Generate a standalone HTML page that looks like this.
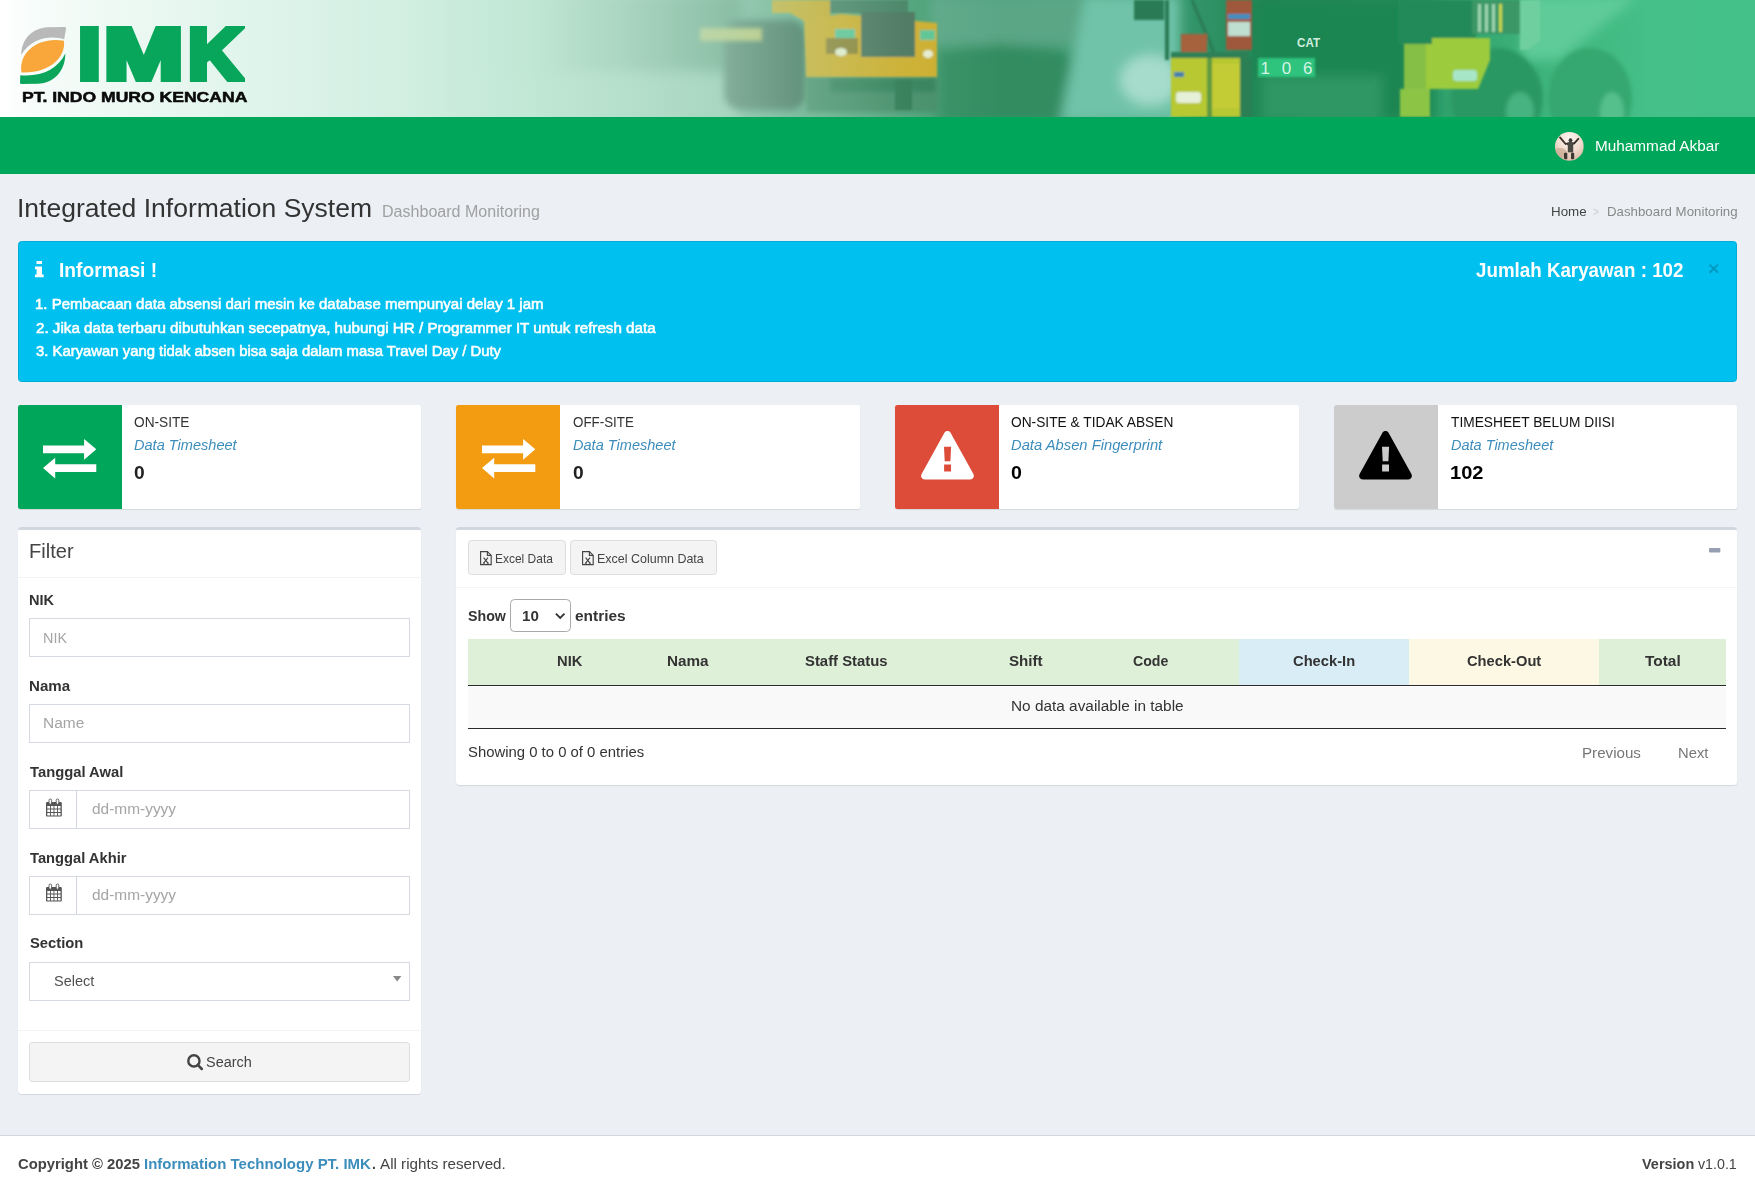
<!DOCTYPE html>
<html lang="en">
<head>
<meta charset="utf-8">
<title>Dashboard Monitoring</title>
<style>
*{box-sizing:border-box;}
html,body{margin:0;padding:0;}
body{width:1755px;height:1192px;overflow:hidden;background:#ecf0f5;font-family:"Liberation Sans",sans-serif;font-size:15px;color:#333;position:relative;}
.abs{position:absolute;}
.t{position:absolute;white-space:nowrap;line-height:1;transform-origin:0 0;display:block;}
svg{position:absolute;overflow:visible;}
#banner{left:0;top:0;width:1755px;height:117px;background:#fff;overflow:hidden;}
#navbar{left:0;top:117px;width:1755px;height:57.4px;background:#00a65a;}
#alert{left:17.8px;top:240.7px;width:1719.3px;height:141px;background:#00c0ef;border:1px solid #00acd6;border-radius:3.5px;}
.ib{position:absolute;top:404.6px;height:104px;width:403.5px;background:#fff;border-radius:2.3px;box-shadow:0 1px 1px rgba(0,0,0,.1);}
.ib .ic{position:absolute;left:0;top:0;width:104px;height:104px;border-radius:2.3px 0 0 2.3px;}
.box{position:absolute;background:#fff;border-top:3.4px solid #d2d6de;border-radius:3.5px;box-shadow:0 1px 1px rgba(0,0,0,.1);}
.hr{position:absolute;height:1.2px;background:#f4f4f4;}
.inp{position:absolute;left:28.8px;width:381.2px;height:39.2px;border:1px solid #d5d9e0;background:#fff;}
.btn{position:absolute;background:#f4f4f4;border:1.15px solid #ddd;border-radius:3.5px;}
#footer{left:0;top:1134.8px;width:1755px;height:58px;background:#fff;border-top:1.15px solid #d2d6de;}
</style>
</head>
<body>

<div id="banner" class="abs">
<svg style="left:0;top:0;" width="1755" height="117" viewBox="0 0 1755 117">
<defs>
<linearGradient id="bg1" x1="0" x2="1" y1="0" y2="0">
<stop offset="0" stop-color="#6fae90"/><stop offset="0.40" stop-color="#6fae90"/><stop offset="0.47" stop-color="#5aa884"/><stop offset="0.55" stop-color="#3f9a6d"/><stop offset="0.62" stop-color="#4aa57e"/><stop offset="0.72" stop-color="#22895a"/><stop offset="0.80" stop-color="#2c9a66"/><stop offset="0.88" stop-color="#3eb47c"/><stop offset="0.94" stop-color="#45c088"/><stop offset="1" stop-color="#43c189"/>
</linearGradient>
<linearGradient id="haze" gradientUnits="userSpaceOnUse" x1="0" x2="1000" y1="0" y2="0">
<stop offset="0" stop-color="#ffffff"/><stop offset="0.04" stop-color="#f6fcf9"/><stop offset="0.24" stop-color="#e1f5ec"/><stop offset="0.40" stop-color="#d2efe2"/><stop offset="0.52" stop-color="#c4e9d8" stop-opacity="0.97"/><stop offset="0.62" stop-color="#c0e6d4" stop-opacity="0.82"/><stop offset="0.72" stop-color="#bde4d1" stop-opacity="0.58"/><stop offset="0.80" stop-color="#bbe3cf" stop-opacity="0.34"/><stop offset="0.90" stop-color="#bbe3cf" stop-opacity="0.12"/><stop offset="1" stop-color="#bbe3cf" stop-opacity="0"/>
</linearGradient>
<filter id="b6" x="-20%" y="-50%" width="140%" height="200%"><feGaussianBlur stdDeviation="6"/></filter>
<filter id="b3" x="-20%" y="-50%" width="140%" height="200%"><feGaussianBlur stdDeviation="3.5"/></filter>
<filter id="b2" x="-20%" y="-50%" width="140%" height="200%"><feGaussianBlur stdDeviation="2"/></filter>
<filter id="b1" x="-20%" y="-50%" width="140%" height="200%"><feGaussianBlur stdDeviation="0.8"/></filter>
</defs>
<rect width="1755" height="117" fill="url(#bg1)"/>
<g filter="url(#b6)">
<!-- hazy left -->
<rect x="480" y="75" width="260" height="50" fill="#8cc4a8"/>
<rect x="560" y="-5" width="180" height="75" fill="#4f9070"/>
<!-- behind truck1 -->
<rect x="930" y="-5" width="170" height="50" fill="#5aa685"/>
<path d="M938 52 1000 44 1060 50 1100 70 1105 123H938Z" fill="#308c60"/>
<!-- teal rock -->
<path d="M1085 -5H1180V122H1060Z" fill="#6fc3a8"/>
<ellipse cx="1150" cy="80" rx="30" ry="25" fill="#a5dccb"/>
<!-- cat truck dark -->
<rect x="1250" y="-5" width="185" height="127" fill="#1d8653"/>
<rect x="1262" y="76" width="120" height="46" fill="#2f9764"/>
<!-- right light body -->
<path d="M1530 -5H1640L1560 60H1520Z" fill="#5fcb99"/>
</g>
<g filter="url(#b3)">
<rect x="724" y="20" width="82" height="90" rx="16" fill="#386b52"/>
</g>
<g filter="url(#b2)">
<!-- truck 1 wheels & shadows -->
<rect x="806" y="76" width="132" height="36" fill="#3f8a65"/>
<rect x="830" y="78" width="105" height="14" fill="#2f7d57"/>
<rect x="700" y="28" width="62" height="13" fill="#b9bf62"/>
<!-- tires right -->
<ellipse cx="1497" cy="98" rx="46" ry="50" fill="#2c9864"/>
<ellipse cx="1590" cy="98" rx="42" ry="50" fill="#34a770"/>
<ellipse cx="1520" cy="112" rx="14" ry="20" fill="#46b380"/>
<ellipse cx="1612" cy="112" rx="12" ry="20" fill="#55c08c"/>
</g>
<g filter="url(#b1)">
<!-- truck 1 yellow -->
<path d="M772 0H830V16L806 22 790 13H772Z" fill="#cbaa27"/>
<rect x="830" y="0" width="78" height="13" fill="#3f7d5f"/>
<path d="M804 19 842 14 937 23V77H806Z" fill="#cfac26"/>
<path d="M861 12H915V57H861Z" fill="#456f59"/>
<rect x="835" y="29" width="20" height="10" fill="#58c493"/>
<rect x="920" y="30" width="15" height="10" fill="#58c493"/>
<rect x="826" y="38" width="32" height="16" fill="#8a7f2e"/>
<ellipse cx="841" cy="52" rx="6" ry="4" fill="#e9efcf"/>
<ellipse cx="928" cy="54" rx="5" ry="4" fill="#e9efcf"/>
<rect x="895" y="80" width="17" height="30" fill="#2a7550"/>
<!-- mirror -->
<rect x="1134" y="0" width="30" height="20" fill="#2b7a55"/>
<rect x="1165" y="0" width="4" height="60" fill="#2b7a55"/>
<path d="M1192 0 1215 55" stroke="#2b7a55" stroke-width="3"/>
<!-- red items -->
<rect x="1181" y="34" width="26" height="20" fill="#a5623d"/>
<rect x="1226" y="0" width="26" height="50" fill="#9f583b"/>
<rect x="1228" y="22" width="22" height="14" fill="#bfe0d0"/>
<rect x="1228" y="14" width="22" height="5" fill="#3f8fc0"/>
<!-- cab yellow-green -->
<rect x="1171" y="55" width="78" height="62" fill="#b7c833"/>
<rect x="1171" y="52" width="78" height="6" fill="#2f8057"/>
<rect x="1207" y="58" width="5" height="59" fill="#5f9a3f"/>
<rect x="1212" y="64" width="27" height="44" fill="#c4cc34"/>
<rect x="1176" y="92" width="25" height="11" rx="3" fill="#e6f0d8"/>
<rect x="1174" y="72" width="10" height="5" fill="#3f7fb0"/>
<rect x="1240" y="58" width="12" height="59" fill="#2a7f55"/>
<!-- 106 label -->
<rect x="1258" y="58" width="57" height="19" fill="#2ec47e"/>
<!-- yellow-green block right -->
<rect x="1398" y="0" width="78" height="44" fill="#218a58"/>
<path d="M1404 44H1432V38H1490V60L1478 89H1404Z" fill="#9ccb3d"/>
<rect x="1404" y="44" width="22" height="45" fill="#86bf45"/>
<rect x="1400" y="89" width="30" height="28" fill="#8cc544"/>
<rect x="1453" y="70" width="24" height="11" rx="3" fill="#a8e6c8"/>
<rect x="1472" y="0" width="48" height="34" fill="#3a9766"/>
<rect x="1478" y="4" width="3" height="28" fill="#9fd6b4"/><rect x="1485" y="4" width="3" height="28" fill="#9fd6b4"/><rect x="1492" y="4" width="3" height="28" fill="#9fd6b4"/><rect x="1499" y="4" width="3" height="28" fill="#c8d848"/>
<path d="M1520 0H1540V40L1528 50H1520Z" fill="#6fcf9f"/>
</g>
<rect width="1000" height="117" fill="url(#haze)"/>
</svg>
<svg style="left:0;top:0;" width="1755" height="117" viewBox="0 0 1755 117">
<text x="1260.5" y="74" font-family="Liberation Sans, sans-serif" font-size="17" fill="#d8f3e4" textLength="52" lengthAdjust="spacing">106</text>
<text x="1297" y="47" font-family="Liberation Sans, sans-serif" font-weight="bold" font-size="13" fill="#cfeede" textLength="23" lengthAdjust="spacingAndGlyphs">CAT</text>
</svg>
<!-- logo -->
<svg style="left:19.7px;top:27.1px;" width="46.2" height="57" viewBox="0 0 46.2 57">
<path fill="#b9b9b9" d="M1.2 28C1.5 12 12 1.2 28 0.3L44.5 0C45.8 0 46.3 0.8 46 2L44.2 12.3C34 8.5 12 9 1.2 28Z"/>
<path fill="#f9a63a" d="M1.5 45.5C-2 25 19 9.5 44 13.8C46 30 30 46.5 1.5 45.5Z"/>
<path fill="#0ba55c" d="M45.3 26.5C45.5 44 34 56 18 56.8L1.5 57C0.5 57 0 56.4 0 55.5L0.3 48.2C22 50 38 42 45.3 26.5Z"/>
</svg>
</div>


<!-- NAVBAR -->
<div id="navbar" class="abs"></div>
<svg style="left:1555.1px;top:131.7px;" width="28.8" height="28.9" viewBox="0 0 28.8 28.9">
<defs><radialGradient id="avg" cx="0.5" cy="0.25" r="0.75"><stop offset="0" stop-color="#fdf7f3"/><stop offset="0.55" stop-color="#f2ddd0"/><stop offset="1" stop-color="#d9b9a4"/></radialGradient><clipPath id="avc"><circle cx="14.4" cy="14.45" r="14.4"/></clipPath></defs>
<g clip-path="url(#avc)"><rect width="28.8" height="28.9" fill="url(#avg)"/>
<ellipse cx="5" cy="21" rx="7" ry="5" fill="#c9a892" opacity="0.7"/>
<path d="M10.6 12 5 5.4M19.2 11.4 23.3 6.8" stroke="#3b302b" stroke-width="1.9" fill="none" stroke-linecap="round"/>
<path d="M12.8 10.4Q15.5 8.6 18.2 10.4V20.4H12.8Z" fill="#4b4a44"/>
<path d="M10 11.2 13 10.6 13 13.5ZM20 10.8 18 10.4 18 13.3Z" fill="#3b302b"/>
<circle cx="15.5" cy="8.2" r="1.9" fill="#3f3a35"/>
<rect x="9" y="20.8" width="3.4" height="6.4" rx="1" fill="#3d3833"/><rect x="16" y="20.8" width="3.2" height="6.4" rx="1" fill="#3d3833"/>
<rect x="12.6" y="20.4" width="3.2" height="8" fill="#e6cdbd" opacity="0.6"/>
</g></svg>


<!-- ALERT -->
<div id="alert" class="abs"></div>
<svg style="left:35.3px;top:261.2px;" width="8.7" height="16.3" viewBox="0 0 8.7 16.3"><path fill="#fff" d="M1.5 0H7V3H1.5Z M0 5.6H7V13.4H8.7V16.3H0V13.4H1.6V8.3H0Z"/></svg>
<svg style="left:1709.3px;top:264.4px;" width="9.6" height="9.4" viewBox="0 0 9.6 9.4"><path stroke="#0099bf" stroke-width="2" fill="none" d="M0.6 0.6 9 8.8M9 0.6 0.6 8.8"/></svg>


<!-- INFO BOXES -->
<div class="ib" style="left:17.6px;">
  <div class="ic" style="background:#00a65a;"></div>
  <svg style="left:25.5px;top:34.4px;" width="53.3" height="39.4" viewBox="0 0 53.3 39.4"><path fill="#fff" d="M0 6.4H41.1V0L53.3 10.3 41.1 20.7V14.2H0Z M53.3 25.3H12.2V18.8L0 29.1 12.2 39.4V33H53.3Z"/></svg>
</div>
<div class="ib" style="left:456.4px;">
  <div class="ic" style="background:#f39c12;"></div>
  <svg style="left:25.5px;top:34.4px;" width="53.3" height="39.4" viewBox="0 0 53.3 39.4"><path fill="#fff" d="M0 6.4H41.1V0L53.3 10.3 41.1 20.7V14.2H0Z M53.3 25.3H12.2V18.8L0 29.1 12.2 39.4V33H53.3Z"/></svg>
</div>
<div class="ib" style="left:895px;">
  <div class="ic" style="background:#dd4b39;"></div>
  <svg style="left:25.6px;top:26px;" width="53" height="48.5" viewBox="0 0 53 48.5"><path fill="#fff" fill-rule="evenodd" d="M29.7 1.9 52.4 43.1C53.7 45.6 52.1 48.5 49.2 48.5H3.8C0.9 48.5 -0.7 45.6 0.6 43.1L23.3 1.9C24.7 -0.6 28.3 -0.6 29.7 1.9Z M23 15.7H30.1L29.4 30.2H23.7Z M23.1 33.6H30V40.5H23.1Z"/></svg>
</div>
<div class="ib" style="left:1333.8px;">
  <div class="ic" style="background:#cccccc;"></div>
  <svg style="left:25.6px;top:26px;" width="53" height="48.5" viewBox="0 0 53 48.5"><path fill="#000" fill-rule="evenodd" d="M29.7 1.9 52.4 43.1C53.7 45.6 52.1 48.5 49.2 48.5H3.8C0.9 48.5 -0.7 45.6 0.6 43.1L23.3 1.9C24.7 -0.6 28.3 -0.6 29.7 1.9Z M23 15.7H30.1L29.4 30.2H23.7Z M23.1 33.6H30V40.5H23.1Z"/></svg>
</div>


<!-- FILTER BOX -->
<div id="filter" class="box" style="left:17.6px;top:526.6px;width:403.5px;height:567.3px;"></div>
<div class="hr" style="left:17.6px;top:577px;width:403.5px;"></div>
<div class="inp" style="top:618.2px;"></div>
<div class="inp" style="top:704.1px;"></div>
<div class="inp" style="top:789.9px;"></div>
<div class="abs" style="left:75.9px;top:789.9px;width:1.15px;height:39.2px;background:#d2d6de;"></div>
<div class="inp" style="top:875.7px;"></div>
<div class="abs" style="left:75.9px;top:875.7px;width:1.15px;height:39.2px;background:#d2d6de;"></div>
<div class="inp" style="top:961.6px;"></div>
<svg style="left:45.6px;top:798.6px;" width="15.8" height="17.6" viewBox="0 0 15.8 17.6"><use href="#cal"/></svg>
<svg style="left:45.6px;top:884.4px;" width="15.8" height="17.6" viewBox="0 0 15.8 17.6">
<g id="cal"><path fill="#555" fill-rule="evenodd" d="M1.2 3H14.6C15.3 3 15.8 3.5 15.8 4.2V16.4C15.8 17.1 15.3 17.6 14.6 17.6H1.2C0.5 17.6 0 17.1 0 16.4V4.2C0 3.5 0.5 3 1.2 3Z M1.3 6.9H4V9.6H1.3Z M4.9 6.9H7.5V9.6H4.9Z M8.4 6.9H11V9.6H8.4Z M11.9 6.9H14.5V9.6H11.9Z M1.3 10.5H4V13.1H1.3Z M4.9 10.5H7.5V13.1H4.9Z M8.4 10.5H11V13.1H8.4Z M11.9 10.5H14.5V13.1H11.9Z M1.3 14H4V16.4H1.3Z M4.9 14H7.5V16.4H4.9Z M8.4 14H11V16.4H8.4Z M11.9 14H14.5V16.4H11.9Z"/>
<rect x="3" y="0" width="2.6" height="5.2" rx="1.3" fill="#fff" stroke="#555" stroke-width="0.9"/><rect x="10.2" y="0" width="2.6" height="5.2" rx="1.3" fill="#fff" stroke="#555" stroke-width="0.9"/></g></svg>
<svg style="left:393.2px;top:976px;" width="8.4" height="5.6" viewBox="0 0 8.4 5.6"><path fill="#888" d="M0 0H8.4L4.2 5.6Z"/></svg>
<div class="hr" style="left:17.6px;top:1029.6px;width:403.5px;"></div>
<div class="btn" style="left:28.8px;top:1042.4px;width:381.2px;height:39.2px;"></div>
<svg style="left:186.8px;top:1054px;" width="16" height="16.4" viewBox="0 0 16 16.4"><circle cx="6.9" cy="6.9" r="5.6" fill="none" stroke="#444" stroke-width="2.4"/><path d="M10.8 10.9 14.8 15" stroke="#444" stroke-width="2.6" stroke-linecap="round"/></svg>


<!-- TABLE BOX -->
<div id="tbox" class="box" style="left:456.4px;top:526.6px;width:1280.9px;height:258.9px;"></div>
<div class="btn" style="left:468px;top:540.4px;width:97.8px;height:34.4px;"></div>
<div class="btn" style="left:570.1px;top:540.4px;width:147.2px;height:34.4px;"></div>
<svg style="left:480.2px;top:550.5px;" width="11.8" height="14.2" viewBox="0 0 11.8 14.2"><use href="#xls"/></svg>
<svg style="left:582.2px;top:550.5px;" width="11.8" height="14.2" viewBox="0 0 11.8 14.2">
<g id="xls" fill="none" stroke="#444" stroke-width="1.15"><path d="M0.6 0.6H7.4L11.2 4.4V13.6H0.6Z"/><path d="M7.4 0.6V4.4H11.2"/><path d="M3.6 6.6 8 12.2M8 6.6 3.6 12.2" stroke-width="1.1"/><path d="M2.8 12.2H5M6.8 12.2H9" stroke-width="0.9"/></g></svg>
<svg style="left:1708.8px;top:548px;" width="11.4" height="4.4" viewBox="0 0 11.4 4.4"><rect width="11.4" height="4.4" rx="1" fill="#97a0b3"/></svg>
<div class="hr" style="left:456.4px;top:586.8px;width:1280.9px;"></div>
<div class="abs" style="left:510.4px;top:598.8px;width:60.4px;height:33px;border:1.15px solid #a9a9a9;border-radius:4.5px;background:#fff;"></div>
<svg style="left:555.3px;top:613.4px;" width="10.4" height="6" viewBox="0 0 10.4 6"><path d="M0.9 0.7 5.2 5 9.5 0.7" fill="none" stroke="#333" stroke-width="1.8"/></svg>
<div class="abs" style="left:468.2px;top:638.8px;width:1257.9px;height:46.5px;background:#dff0d8;"></div>
<div class="abs" style="left:1239px;top:638.8px;width:169.7px;height:46.5px;background:#d9edf7;"></div>
<div class="abs" style="left:1408.7px;top:638.8px;width:190.3px;height:46.5px;background:#fcf8e3;"></div>
<div class="abs" style="left:468.2px;top:685.3px;width:1257.9px;height:1.2px;background:#2a2a2a;"></div>
<div class="abs" style="left:468.2px;top:686.5px;width:1257.9px;height:41.2px;background:#f9f9f9;"></div>
<div class="abs" style="left:468.2px;top:727.6px;width:1257.9px;height:1.2px;background:#2a2a2a;"></div>


<!-- FOOTER -->
<div id="footer" class="abs"></div>

<!-- TEXT LAYER -->
<div id="texts" style="position:absolute;left:0;top:0;width:1755px;height:1192px;will-change:transform;">
<span id="imk"><span class="t" style="left:77.65px;top:18.70px;font-size:71.4px;color:#08a65b;transform:scaleX(1.1500);font-weight:bold;-webkit-text-stroke:6px #08a65b;">I</span><span class="t" style="left:104.37px;top:18.70px;font-size:71.4px;color:#08a65b;transform:scaleX(1.3333);font-weight:bold;-webkit-text-stroke:6px #08a65b;">M</span><span class="t" style="left:188.15px;top:18.70px;font-size:71.4px;color:#08a65b;transform:scaleX(1.0528);font-weight:bold;-webkit-text-stroke:6px #08a65b;">K</span></span>
<span class="t" style="left:22.11px;top:90.00px;font-size:14.0px;color:#0a0a0a;transform:scaleX(1.2540);font-weight:bold;-webkit-text-stroke:0.5px #0a0a0a;">PT. INDO MURO KENCANA</span>
<span class="t" style="left:1595.21px;top:137.50px;font-size:15.5px;color:#fff;transform:scaleX(0.9891);">Muhammad Akbar</span>
<span class="t" style="left:16.81px;top:194.60px;font-size:26.6px;color:#333;transform:scaleX(0.9966);">Integrated Information System</span>
<span class="t" style="left:382.20px;top:203.70px;font-size:16.0px;color:#a0a0a0;transform:scaleX(1.0031);">Dashboard Monitoring</span>
<span class="t" style="left:1550.90px;top:204.60px;font-size:13.3px;color:#444;transform:scaleX(1.0037);">Home</span>
<span class="t" style="left:1592.50px;top:204.60px;font-size:13.3px;color:#ccc;transform:scaleX(0.7500);">&gt;</span>
<span class="t" style="left:1607.30px;top:204.60px;font-size:13.3px;color:#888;transform:scaleX(0.9982);">Dashboard Monitoring</span>
<span class="t" style="left:58.51px;top:261.30px;font-size:19.4px;color:#fff;transform:scaleX(0.9900);font-weight:bold;">Informasi !</span>
<span class="t" style="left:1476.00px;top:261.40px;font-size:19.4px;color:#fff;transform:scaleX(0.9673);font-weight:bold;">Jumlah Karyawan : 102</span>
<span class="t" style="left:35.03px;top:296.40px;font-size:15.5px;color:#fff;transform:scaleX(0.9692);-webkit-text-stroke:0.6px #fff;">1. Pembacaan data absensi dari mesin ke database mempunyai delay 1 jam</span>
<span class="t" style="left:36.00px;top:319.60px;font-size:15.5px;color:#fff;transform:scaleX(0.9789);-webkit-text-stroke:0.6px #fff;">2. Jika data terbaru dibutuhkan secepatnya, hubungi HR / Programmer IT untuk refresh data</span>
<span class="t" style="left:36.00px;top:342.70px;font-size:15.5px;color:#fff;transform:scaleX(0.9587);-webkit-text-stroke:0.6px #fff;">3. Karyawan yang tidak absen bisa saja dalam masa Travel Day / Duty</span>
<span class="t" style="left:134.10px;top:414.00px;font-size:15.5px;color:#333;transform:scaleX(0.8829);">ON-SITE</span>
<span class="t" style="left:134.10px;top:436.50px;font-size:15.5px;color:#3c8dbc;transform:scaleX(0.9394);font-style:italic;">Data Timesheet</span>
<span class="t" style="left:134.10px;top:462.90px;font-size:19.2px;color:#222;transform:scaleX(1.0000);font-weight:bold;">0</span>
<span class="t" style="left:572.90px;top:414.00px;font-size:15.5px;color:#333;transform:scaleX(0.8610);">OFF-SITE</span>
<span class="t" style="left:572.90px;top:436.50px;font-size:15.5px;color:#3c8dbc;transform:scaleX(0.9385);font-style:italic;">Data Timesheet</span>
<span class="t" style="left:572.90px;top:462.90px;font-size:19.2px;color:#222;transform:scaleX(1.0000);font-weight:bold;">0</span>
<span class="t" style="left:1011.20px;top:414.00px;font-size:15.5px;color:#111;transform:scaleX(0.8863);">ON-SITE &amp; TIDAK ABSEN</span>
<span class="t" style="left:1011.20px;top:436.50px;font-size:15.5px;color:#3c8dbc;transform:scaleX(0.9520);font-style:italic;">Data Absen Fingerprint</span>
<span class="t" style="left:1011.20px;top:462.90px;font-size:19.2px;color:#000;transform:scaleX(1.0200);font-weight:bold;">0</span>
<span class="t" style="left:1450.60px;top:414.00px;font-size:15.5px;color:#111;transform:scaleX(0.8860);">TIMESHEET BELUM DIISI</span>
<span class="t" style="left:1450.60px;top:436.50px;font-size:15.5px;color:#3c8dbc;transform:scaleX(0.9357);font-style:italic;">Data Timesheet</span>
<span class="t" style="left:1449.56px;top:462.90px;font-size:19.2px;color:#000;transform:scaleX(1.0447);font-weight:bold;">102</span>
<span class="t" style="left:28.69px;top:541.70px;font-size:19.9px;color:#444;transform:scaleX(1.0097);">Filter</span>
<span class="t" style="left:28.76px;top:592.00px;font-size:15.5px;color:#333;transform:scaleX(0.9396);font-weight:bold;">NIK</span>
<span class="t" style="left:43.37px;top:629.70px;font-size:15.5px;color:#a5a5a5;transform:scaleX(0.9294);">NIK</span>
<span class="t" style="left:28.73px;top:678.10px;font-size:15.5px;color:#333;transform:scaleX(0.9737);font-weight:bold;">Nama</span>
<span class="t" style="left:43.30px;top:715.30px;font-size:15.5px;color:#a5a5a5;transform:scaleX(0.9994);">Name</span>
<span class="t" style="left:29.70px;top:763.60px;font-size:15.5px;color:#333;transform:scaleX(0.9535);font-weight:bold;">Tanggal Awal</span>
<span class="t" style="left:91.90px;top:801.40px;font-size:15.5px;color:#a5a5a5;transform:scaleX(0.9960);">dd-mm-yyyy</span>
<span class="t" style="left:29.60px;top:849.50px;font-size:15.5px;color:#333;transform:scaleX(0.9495);font-weight:bold;">Tanggal Akhir</span>
<span class="t" style="left:91.90px;top:887.20px;font-size:15.5px;color:#a5a5a5;transform:scaleX(0.9960);">dd-mm-yyyy</span>
<span class="t" style="left:29.60px;top:935.00px;font-size:15.5px;color:#333;transform:scaleX(0.9529);font-weight:bold;">Section</span>
<span class="t" style="left:53.70px;top:972.70px;font-size:15.5px;color:#505050;transform:scaleX(0.9367);">Select</span>
<span class="t" style="left:206.30px;top:1054.40px;font-size:15.5px;color:#444;transform:scaleX(0.9321);">Search</span>
<span class="t" style="left:494.80px;top:551.60px;font-size:13.3px;color:#444;transform:scaleX(0.8998);">Excel Data</span>
<span class="t" style="left:596.66px;top:551.60px;font-size:13.3px;color:#444;transform:scaleX(0.9382);">Excel Column Data</span>
<span class="t" style="left:468.20px;top:607.90px;font-size:15.5px;color:#333;transform:scaleX(0.9154);font-weight:bold;">Show</span>
<span class="t" style="left:521.60px;top:607.90px;font-size:15.5px;color:#333;transform:scaleX(0.9747);font-weight:bold;">10</span>
<span class="t" style="left:574.60px;top:607.90px;font-size:15.5px;color:#333;transform:scaleX(0.9978);font-weight:bold;">entries</span>
<span class="t" style="left:556.75px;top:653.10px;font-size:15.5px;color:#333;transform:scaleX(0.9509);font-weight:bold;">NIK</span>
<span class="t" style="left:667.31px;top:653.10px;font-size:15.5px;color:#333;transform:scaleX(0.9857);font-weight:bold;">Nama</span>
<span class="t" style="left:804.80px;top:653.10px;font-size:15.5px;color:#333;transform:scaleX(0.9591);font-weight:bold;">Staff Status</span>
<span class="t" style="left:1008.60px;top:653.10px;font-size:15.5px;color:#333;transform:scaleX(0.9774);font-weight:bold;">Shift</span>
<span class="t" style="left:1132.60px;top:653.10px;font-size:15.5px;color:#333;transform:scaleX(0.9124);font-weight:bold;">Code</span>
<span class="t" style="left:1293.20px;top:653.10px;font-size:15.5px;color:#333;transform:scaleX(0.9494);font-weight:bold;">Check-In</span>
<span class="t" style="left:1467.30px;top:653.10px;font-size:15.5px;color:#333;transform:scaleX(0.9475);font-weight:bold;">Check-Out</span>
<span class="t" style="left:1645.20px;top:653.10px;font-size:15.5px;color:#333;transform:scaleX(0.9953);font-weight:bold;">Total</span>
<span class="t" style="left:1010.61px;top:698.20px;font-size:15.5px;color:#333;transform:scaleX(0.9916);">No data available in table</span>
<span class="t" style="left:468.20px;top:744.10px;font-size:15.5px;color:#333;transform:scaleX(0.9598);">Showing 0 to 0 of 0 entries</span>
<span class="t" style="left:1582.22px;top:744.70px;font-size:15.5px;color:#777;transform:scaleX(0.9773);">Previous</span>
<span class="t" style="left:1677.75px;top:744.70px;font-size:15.5px;color:#777;transform:scaleX(0.9536);">Next</span>
<span class="t" style="left:18.40px;top:1156.20px;font-size:15.5px;color:#444;transform:scaleX(0.9549);font-weight:bold;">Copyright © 2025</span>
<span class="t" style="left:144.23px;top:1156.20px;font-size:15.5px;color:#3c8dbc;transform:scaleX(0.9663);font-weight:bold;">Information Technology PT. IMK</span>
<span class="t" style="left:372.10px;top:1156.20px;font-size:15.5px;color:#444;transform:scaleX(0.9000);font-weight:bold;">.</span>
<span class="t" style="left:380.10px;top:1156.20px;font-size:15.5px;color:#444;transform:scaleX(0.9800);">All rights reserved.</span>
<span class="t" style="left:1641.70px;top:1156.20px;font-size:15.5px;color:#444;transform:scaleX(0.9328);font-weight:bold;">Version</span>
<span class="t" style="left:1698.30px;top:1156.20px;font-size:15.5px;color:#444;transform:scaleX(0.9182);">v1.0.1</span>
</div>

</body>
</html>
